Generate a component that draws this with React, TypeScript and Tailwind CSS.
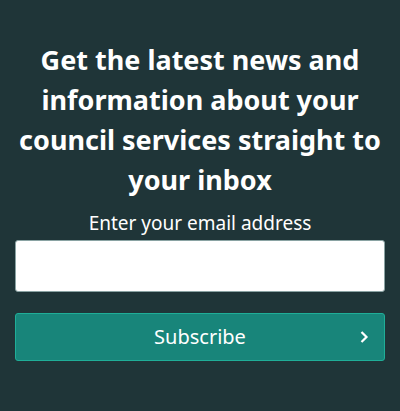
import React from 'react';

const App = () => {
  return (
    <div
      className="min-h-[411px] w-full bg-[#1f3538] px-[15px] pt-[40px] text-white"
      style={{ fontFamily: '"Noto Sans", "Open Sans", sans-serif' }}
    >
      <h2 className="text-center text-[27px] font-bold leading-[40px]">
        Get the latest news and information about your council services straight to your inbox
      </h2>
      <form className="mt-[10px] flex flex-col" onSubmit={(e) => e.preventDefault()}>
        <label htmlFor="email" className="text-center text-[19px] leading-[26px]">
          Enter your email address
        </label>
        <input
          id="email"
          type="email"
          className="mt-[4px] h-[52px] w-full rounded-[3px] border border-[#8aa3a3] bg-white px-3 text-[18px] text-gray-900 outline-none"
        />
        <button
          type="submit"
          className="relative mt-[21px] flex h-[48px] w-full items-center justify-center rounded-[3px] border border-[#1fae98] bg-[#18857a] text-[20px]"
        >
          <span>Subscribe</span>
          <svg
            className="absolute right-[15px] top-1/2 -translate-y-1/2"
            width="10"
            height="14"
            viewBox="0 0 10 14"
            fill="none"
          >
            <path d="M2.5 2 L7.5 7 L2.5 12" stroke="white" strokeWidth="2.2" />
          </svg>
        </button>
      </form>
    </div>
  );
};

export default App;
